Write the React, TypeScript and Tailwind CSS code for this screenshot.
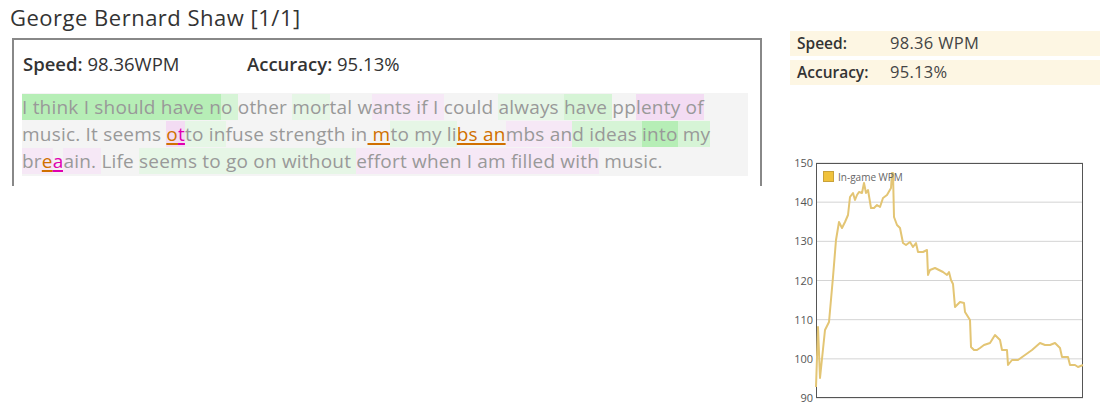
import type { CSSProperties } from "react";

type Seg = { t: string; bg?: string; ul?: "o" | "m" };

const G1 = "bg-[#b6eeb6]";
const G2 = "bg-[#d6f4d6]";
const G3 = "bg-[#e6f6e6]";
const P1 = "bg-[#f3dcf3]";
const P2 = "bg-[#f6e8f6]";

const lines: Seg[][] = [
  [
    { t: "I think I should have n", bg: G1 },
    { t: "o ", bg: G2 },
    { t: "other " },
    { t: "mor", bg: G3 },
    { t: "tal w" },
    { t: "ants if I ", bg: P2 },
    { t: "could " },
    { t: "always ", bg: G3 },
    { t: "have ", bg: G2 },
    { t: "pp" },
    { t: "lenty of", bg: P1 },
  ],
  [
    { t: "music. It seems " },
    { t: "o", bg: P1, ul: "o" },
    { t: "t", bg: P1, ul: "m" },
    { t: "to in", bg: G3 },
    { t: "fuse strength in" },
    { t: " m", ul: "o" },
    { t: "to my li", bg: G3 },
    { t: "bs an", ul: "o" },
    { t: "mbs an", bg: P2 },
    { t: "d ideas ", bg: G2 },
    { t: "into", bg: G1 },
    { t: " my", bg: G2 },
  ],
  [
    { t: "br", bg: P2 },
    { t: "e", bg: P2, ul: "o" },
    { t: "a", ul: "m" },
    { t: "ain. ", bg: P2 },
    { t: "Life " },
    { t: "seems to go on without ", bg: G3 },
    { t: "effort when I am filled with", bg: P2 },
    { t: " music." },
  ],
];

const font: CSSProperties = { fontFamily: '"Open Sans", "Noto Sans", sans-serif' };

// traced from the reference, page coordinates
const pts = [
  [816, 387], [818, 327], [820, 378], [825, 330], [829, 322], [833, 277], [836, 240],
  [839, 222], [842, 228], [845, 222], [848, 215], [850, 197], [853, 193], [855, 200],
  [857, 195], [859, 192], [862, 193], [864, 183], [866, 193], [868, 190], [871, 208],
  [874, 208], [877, 205], [880, 207], [883, 198], [887, 195], [891, 188], [892, 173],
  [893, 173], [894, 217], [897, 225], [900, 228], [903, 243], [906, 245], [910, 242],
  [913, 247], [916, 243], [918, 252], [923, 252], [927, 250], [928, 275], [930, 270],
  [935, 268], [939, 270], [943, 272], [947, 275], [949, 272], [951, 280], [953, 284],
  [955, 307], [957, 305], [960, 302], [964, 303], [965, 312], [970, 320], [971, 347],
  [974, 350], [977, 350], [980, 348], [984, 345], [990, 343], [995, 335], [1000, 340],
  [1002, 350], [1007, 350], [1008, 365], [1012, 360], [1018, 360], [1025, 355],
  [1032, 350], [1040, 343], [1045, 345], [1050, 345], [1055, 343], [1060, 348],
  [1062, 357], [1068, 357], [1070, 365], [1075, 365], [1078, 367], [1083, 365],
];

function Chart() {
  const ticks = [150, 140, 130, 120, 110, 100, 90];
  return (
    <svg width={315} height={255} className="block">
      <g transform="translate(-785,-155)">
        {ticks.map((v, i) => {
          const y = 163 + i * 39.17;
          return (
            <g key={v}>
              <line x1={816} x2={1083} y1={y} y2={y} stroke="#d4d4d4" strokeWidth={1} />
              <text x={813} y={y + 4} textAnchor="end" fontSize={11} fill="#555" style={font}>
                {v}
              </text>
            </g>
          );
        })}
        <rect x={816.5} y={163.5} width={266} height={234} fill="none" stroke="#555" strokeWidth={1} />
        <polyline
          points={pts.map((p) => p.join(",")).join(" ")}
          fill="none"
          stroke="#e3c574"
          strokeWidth={2}
          strokeLinejoin="round"
        />
        <rect x={823.5} y={171.5} width={10} height={10} fill="#f0c23c" stroke="#c9a23a" strokeWidth={1} />
        <text x={838} y={181} fontSize={10} fill="#666" style={font}>
          In-game WPM
        </text>
      </g>
    </svg>
  );
}

export default function App() {
  return (
    <div className="flex h-[418px] w-[1100px] bg-white text-[#333]" style={font}>
      <div className="w-[780px] pl-[10px]">
        <h1 className="h-[38px] pt-[1px] text-[22px] leading-[32px] tracking-[0.5px] text-[#333]">
          George Bernard Shaw [1/1]
        </h1>
        <div className="ml-[2px] h-[148px] w-[750px] border-x-2 border-t-2 border-[#888] px-2">
          <div className="flex h-[53px] items-center pb-[5px] pl-[1px] text-[18.5px]">
            <div className="w-[224px]">
              <b className="font-semibold">Speed:</b> 98.36WPM
            </div>
            <div>
              <b className="font-semibold">Accuracy:</b> 95.13%
            </div>
          </div>
          <div className="w-[726px] bg-[#f4f4f4] pb-[1px] text-[19px] leading-[28px] tracking-[0.2px] text-[#999]">
            {lines.map((line, i) => (
              <div key={i} className="-mt-[1px] whitespace-pre first:mt-0">
                {line.map((s, j) => (
                  <span
                    key={j}
                    className={[
                      s.bg ?? "",
                      s.ul === "o" ? "text-[#d07000] underline decoration-2 underline-offset-2" : "",
                      s.ul === "m" ? "text-[#e000b0] underline decoration-2 underline-offset-2" : "",
                    ].join(" ")}
                  >
                    {s.t}
                  </span>
                ))}
              </div>
            ))}
          </div>
        </div>
      </div>
      <div className="w-[320px] pl-[10px] pt-[31px]">
        <div className="flex h-[25px] items-center bg-[#fdf6e3] pl-[7px]">
          <b className="w-[93px] text-[15.5px] font-semibold text-[#333]">Speed:</b>
          <span className="text-[16.5px] tracking-[0.3px] text-[#444]">98.36 WPM</span>
        </div>
        <div className="mt-[4px] flex h-[25px] items-center bg-[#fdf6e3] pl-[7px]">
          <b className="w-[93px] text-[15.5px] font-semibold text-[#333]">Accuracy:</b>
          <span className="text-[16.5px] tracking-[0.3px] text-[#444]">95.13%</span>
        </div>
        <div className="-ml-[5px] mt-[70px]">
          <Chart />
        </div>
      </div>
    </div>
  );
}
